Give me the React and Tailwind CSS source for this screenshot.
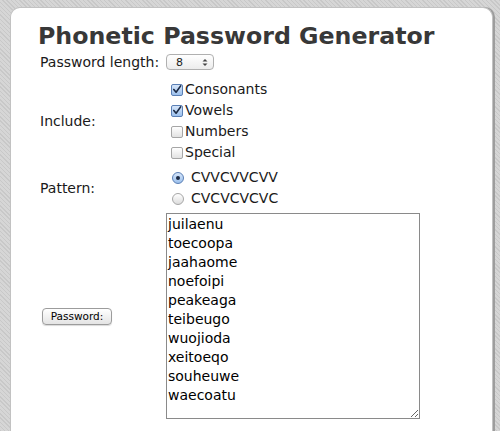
import React from 'react';

const passwords = [
  'juilaenu',
  'toecoopa',
  'jaahaome',
  'noefoipi',
  'peakeaga',
  'teibeugo',
  'wuojioda',
  'xeitoeqo',
  'souheuwe',
  'waecoatu',
];

function Checkbox({ checked }) {
  return (
    <span
      className={
        'inline-flex h-[12px] w-[12px] items-center justify-center rounded-[2px] border ' +
        (checked
          ? 'border-[#5a7fb5] bg-gradient-to-b from-[#d6e6fa] to-[#9cc0ec]'
          : 'border-[#a6a6a6] bg-gradient-to-b from-[#ffffff] to-[#e2e2e2]')
      }
    >
      {checked && (
        <svg width="11" height="11" viewBox="0 0 11 11" className="-mt-[1px]">
          <path d="M2 5.5 L4.5 8.5 L9.5 1.5" fill="none" stroke="#1c2a44" strokeWidth="1.8" strokeLinecap="round" strokeLinejoin="round" />
        </svg>
      )}
    </span>
  );
}

function Radio({ checked }) {
  return (
    <span
      className={
        'inline-flex h-[12px] w-[12px] items-center justify-center rounded-full border ' +
        (checked
          ? 'border-[#5a7fb5] bg-gradient-to-b from-[#d6e6fa] to-[#9cc0ec]'
          : 'border-[#a6a6a6] bg-gradient-to-b from-[#ffffff] to-[#dcdcdc]')
      }
    >
      {checked && <span className="h-[4px] w-[4px] rounded-full bg-[#1c2a44]" />}
    </span>
  );
}

export default function App() {
  return (
    <div className="h-[431px] w-[500px] overflow-hidden bg-[repeating-linear-gradient(45deg,#c8c8c8_0px,#c8c8c8_1px,#d6d6d6_1px,#d6d6d6_3px)] pl-[10px] pr-[7px] pt-[7px] font-['DejaVu_Sans',sans-serif]">
      <div className="h-[440px] rounded-t-[10px] border border-b-0 border-[#c2c2c2] bg-white pl-[29px] pt-[14px] shadow-[2px_0_0_#9d9d9d]">
        <h1 className="-ml-[2px] text-[23.7px] font-bold leading-[28px] text-[#383838]">
          Phonetic Password Generator
        </h1>

        <div className="mt-[4px] grid grid-cols-[126px_1fr] text-[14px] text-[#1a1a1a]">
          {/* length */}
          <div className="flex h-[16px] items-center leading-[16px]">Password length:</div>
          <div className="flex h-[16px] items-center">
            <div className="flex h-[16px] w-[48px] items-center justify-between rounded-[4px] border border-[#b0b0b0] bg-gradient-to-b from-white to-[#ececec] pl-[9px] pr-[5px] text-[11px] leading-none">
              <span>8</span>
              <svg width="6" height="9" viewBox="0 0 6 9">
                <path d="M0.5 3.5 L3 1 L5.5 3.5 Z" fill="#444" />
                <path d="M0.5 5.5 L3 8 L5.5 5.5 Z" fill="#444" />
              </svg>
            </div>
          </div>

          {/* include */}
          <div className="mt-[9px] flex items-center">Include:</div>
          <div className="mt-[9px] flex flex-col pl-[5px]">
            {[
              ['Consonants', true],
              ['Vowels', true],
              ['Numbers', false],
              ['Special', false],
            ].map(([label, on]) => (
              <div key={label} className="flex h-[21px] items-center gap-[2px] leading-[21px]">
                <Checkbox checked={on} />
                <span>{label}</span>
              </div>
            ))}
          </div>

          {/* pattern */}
          <div className="mt-[4px] flex items-center">Pattern:</div>
          <div className="mt-[4px] flex flex-col pl-[6px]">
            {[
              ['CVVCVVCVV', true],
              ['CVCVCVCVC', false],
            ].map(([label, on]) => (
              <div key={label} className="flex h-[21px] items-center gap-[7px] leading-[21px]">
                <Radio checked={on} />
                <span>{label}</span>
              </div>
            ))}
          </div>

          {/* result */}
          <div className="mt-[4px] flex items-center pl-[2px]">
            <button className="h-[17px] w-[70px] rounded-[4px] border border-[#9c9c9c] bg-gradient-to-b from-white to-[#e4e4e4] text-[10.5px] leading-[15px] text-black shadow-[0_1px_1px_rgba(0,0,0,0.15)]">
              Password:
            </button>
          </div>
          <div className="mt-[4px]">
            <textarea
              readOnly
              value={passwords.join('\n')}
              className="block h-[206px] w-[254px] resize border border-[#8a8a8a] bg-white px-[1px] pt-[1px] text-[14px] leading-[19px] text-black outline-none"
            />
          </div>
        </div>
      </div>
    </div>
  );
}
